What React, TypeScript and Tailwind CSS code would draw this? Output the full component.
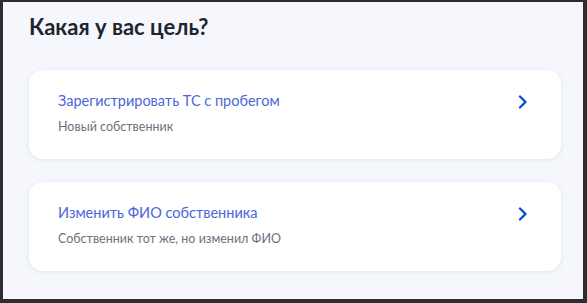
import React from "react";

function Chevron() {
  return (
    <svg width="12" height="14" viewBox="0 0 12 14" fill="none">
      <path d="M3 1.5 L8.5 7 L3 12.5" stroke="#0d4cd3" strokeWidth="2.4" strokeLinecap="round" strokeLinejoin="round" />
    </svg>
  );
}

function Card({ title, sub }: { title: string; sub: string }) {
  return (
    <div className="flex h-[89px] items-start justify-between rounded-[14px] bg-white pl-[29px] pr-[32px] pt-[22px] shadow-[0_1px_4px_rgba(180,195,230,0.35)]">
      <div className="flex flex-col">
        <div className="text-[14.5px] leading-[18px] text-[#4b67d8]">{title}</div>
        <div className="mt-[8px] text-[12.5px] leading-[17px] text-[#6b7280]">{sub}</div>
      </div>
      <div className="mt-[3px]">
        <Chevron />
      </div>
    </div>
  );
}

export default function App() {
  return (
    <div className="h-[303px] w-[587px] bg-[#2e2e2e] pl-[3px] pt-[2px] pr-[4px] pb-[4px]" style={{ fontFamily: "Lato, 'Noto Sans', sans-serif" }}>
      <div className="flex h-full flex-col bg-[#f5f7fc] pl-[26px] pr-[22px]">
        <h1 className="mt-[10px] text-[22px] font-bold leading-[30px] text-[#1f2530]">Какая у вас цель?</h1>
        <div className="mt-[28px] flex flex-col gap-[23px]">
          <Card title="Зарегистрировать ТС с пробегом" sub="Новый собственник" />
          <Card title="Изменить ФИО собственника" sub="Собственник тот же, но изменил ФИО" />
        </div>
      </div>
    </div>
  );
}
